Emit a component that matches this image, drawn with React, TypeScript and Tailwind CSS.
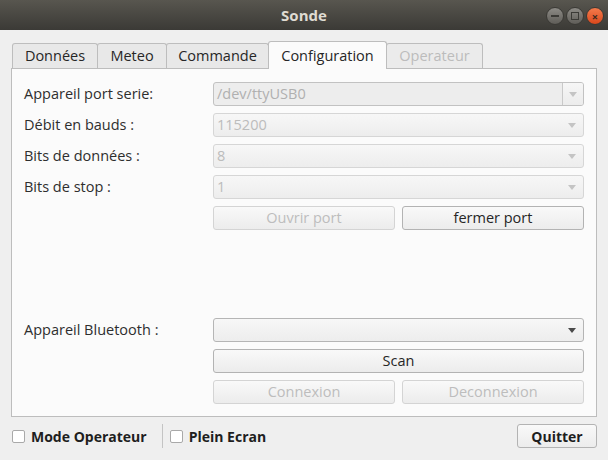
import React from 'react';

const font = { fontFamily: '"Open Sans", "Noto Sans", sans-serif' };

function Arrow({ disabled }: { disabled?: boolean }) {
  return (
    <svg width="8" height="5" viewBox="0 0 8 5" className="shrink-0">
      <path d="M0 0 L8 0 L4 5 Z" fill={disabled ? '#c4c4c4' : '#4a4a4a'} />
    </svg>
  );
}

function Combo({ value, disabled, editable }: { value?: string; disabled?: boolean; editable?: boolean }) {
  if (editable) {
    return (
      <div className="flex h-[24px] rounded-[3px] border border-[#c2c2c2] bg-[#ededed] overflow-hidden">
        <div className="flex-1 flex items-center px-[3px] text-[14.5px] text-[#b0b0b0]">{value}</div>
        <div className="w-[21px] border-l border-[#c9c9c9] bg-gradient-to-b from-[#f6f6f6] to-[#ececec] flex items-center justify-center">
          <Arrow disabled />
        </div>
      </div>
    );
  }
  return (
    <div
      className={`flex items-center h-[24px] rounded-[3px] border bg-gradient-to-b from-[#f7f7f7] to-[#ededed] pl-[3px] pr-[7px] text-[14.5px] ${
        disabled ? 'border-[#d6d6d6] text-[#bcbcbc]' : 'border-[#b5b5b5] text-[#3c3c3c]'
      }`}
    >
      <div className="flex-1">{value}</div>
      <Arrow disabled={disabled} />
    </div>
  );
}

function Button({ label, disabled }: { label: string; disabled?: boolean }) {
  return (
    <div
      className={`flex-1 flex items-center justify-center h-[24px] rounded-[3px] border bg-gradient-to-b from-[#f9f9f9] to-[#ececec] text-[14.5px] ${
        disabled ? 'border-[#d4d4d4] text-[#bdbdbd]' : 'border-[#b3b3b3] text-[#262626]'
      }`}
    >
      {label}
    </div>
  );
}

function Row({ label, children }: { label: string; children: React.ReactNode }) {
  return (
    <div className="flex items-center">
      <div className="w-[189px] text-[14.5px] text-[#2e2e2e]">{label}</div>
      <div className="flex-1">{children}</div>
    </div>
  );
}

const tabs = [
  { label: 'Données', w: 'w-[86px]' },
  { label: 'Meteo', w: 'w-[70px]' },
  { label: 'Commande', w: 'w-[103px]' },
  { label: 'Configuration', w: 'w-[119px]', active: true },
  { label: 'Operateur', w: 'w-[97px]', disabled: true },
];

export default function App() {
  return (
    <div className="w-[608px] h-[460px] bg-[#efefef] flex flex-col overflow-hidden" style={font}>
      {/* title bar */}
      <div className="relative h-[30px] bg-gradient-to-b from-[#58564f] to-[#3b3a36] flex items-center justify-center">
        <span className="text-[15px] font-bold text-[#dfdbd2]">Sonde</span>
        <div className="absolute right-[4px] top-[7px] flex gap-[2px]">
          <div className="w-[18px] h-[18px] rounded-full bg-gradient-to-b from-[#8d8b86] to-[#5f5d58] border border-[#3a3935] flex items-center justify-center">
            <div className="w-[8px] h-[2px] bg-[#3b3a36]" />
          </div>
          <div className="w-[18px] h-[18px] rounded-full bg-gradient-to-b from-[#8d8b86] to-[#5f5d58] border border-[#3a3935] flex items-center justify-center">
            <div className="w-[8px] h-[8px] border-[1.5px] border-[#3b3a36]" />
          </div>
          <div className="w-[18px] h-[18px] rounded-full bg-gradient-to-b from-[#f47a4b] to-[#d9471a] border border-[#3a3935] flex items-center justify-center text-[11px] leading-none font-bold text-[#3b2a20]">
            ×
          </div>
        </div>
      </div>

      {/* tabs */}
      <div className="px-[11px] pt-[11px]">
        <div className="flex items-end pl-px">
          {tabs.map((t, i) => (
            <div
              key={t.label}
              className={`${t.w} ${i > 0 ? '-ml-px' : ''} flex items-center justify-center border border-b-0 border-[#bdbdbd] rounded-t-[3px] text-[14.5px] ${
                t.active
                  ? 'relative z-10 h-[28px] -mb-px bg-[#fbfbfb] text-[#262626]'
                  : t.disabled
                  ? 'h-[25px] bg-[#ebebeb] text-[#bcbcbc]'
                  : 'h-[25px] bg-[#e8e8e8] text-[#262626]'
              }`}
            >
              {t.label}
            </div>
          ))}
        </div>

        {/* panel */}
        <div className="h-[349px] border border-[#bdbdbd] bg-[#fbfbfb] px-[12px] pt-[13px] pb-[12px] flex flex-col">
          <div className="flex flex-col gap-[7px]">
            <Row label="Appareil port serie:">
              <Combo value="/dev/ttyUSB0" editable />
            </Row>
            <Row label="Débit en bauds :">
              <Combo value="115200" disabled />
            </Row>
            <Row label="Bits de données :">
              <Combo value="8" disabled />
            </Row>
            <Row label="Bits de stop :">
              <Combo value="1" disabled />
            </Row>
            <div className="flex pl-[189px] gap-[7px]">
              <Button label="Ouvrir port" disabled />
              <Button label="fermer port" />
            </div>
          </div>
          <div className="flex-1" />
          <div className="flex flex-col gap-[7px]">
            <Row label="Appareil Bluetooth :">
              <Combo value="" />
            </Row>
            <div className="flex pl-[189px]">
              <Button label="Scan" />
            </div>
            <div className="flex pl-[189px] gap-[7px]">
              <Button label="Connexion" disabled />
              <Button label="Deconnexion" disabled />
            </div>
          </div>
        </div>
      </div>

      {/* bottom bar */}
      <div className="flex items-center px-[11px] mt-[7px] h-[24px]">
        <div className="w-[13px] h-[13px] ml-px border border-[#a9a9a9] bg-white rounded-[2px]" />
        <span className="ml-[6px] text-[14px] font-bold text-[#1e1e1e]">Mode Operateur</span>
        <div className="ml-[15px] w-px h-[24px] bg-[#c4c4c4]" />
        <div className="ml-[7px] w-[13px] h-[13px] border border-[#a9a9a9] bg-white rounded-[2px]" />
        <span className="ml-[6px] text-[14px] font-bold text-[#1e1e1e]">Plein Ecran</span>
        <div className="flex-1" />
        <div className="w-[80px] h-[24px] flex items-center justify-center rounded-[3px] border border-[#b3b3b3] bg-gradient-to-b from-[#f9f9f9] to-[#ececec] text-[14px] font-bold text-[#1e1e1e]">
          Quitter
        </div>
      </div>
    </div>
  );
}
